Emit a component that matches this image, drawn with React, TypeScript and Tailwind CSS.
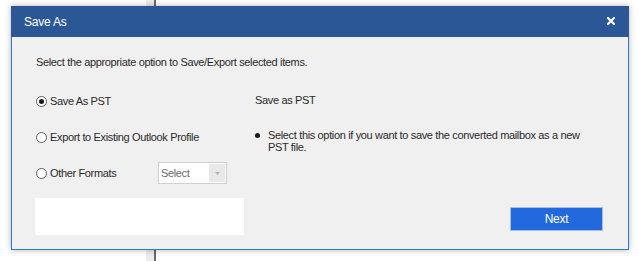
import { useState } from "react";

type Option = { id: string; label: string };

const options: Option[] = [
  { id: "pst", label: "Save As PST" },
  { id: "profile", label: "Export to Existing Outlook Profile" },
  { id: "other", label: "Other Formats" },
];

function Radio({ checked }: { checked: boolean }) {
  return (
    <span className="flex h-[11px] w-[11px] shrink-0 items-center justify-center rounded-full border border-[#5c5c5c] bg-white">
      {checked && <span className="h-[5px] w-[5px] rounded-full bg-[#1a1a1a]" />}
    </span>
  );
}

export default function App() {
  const [choice, setChoice] = useState("pst");

  return (
    <div
      className="relative h-[261px] w-[639px] overflow-hidden bg-white text-[11px] tracking-[-0.35px] text-[#2a2a2a]"
      style={{ fontFamily: '"Liberation Sans", Arial, sans-serif' }}
    >
      {/* window behind the dialog */}
      <div className="absolute left-[146px] top-0 flex h-full">
        <div className="h-full w-[8px] bg-[#ececec]" />
        <div className="h-full w-[2px] bg-[#6a6a6a]" />
      </div>

      <div className="relative ml-[11px] mt-[6px] flex h-[244px] w-[618px] flex-col border border-[#2f78d4] bg-[#f0f0f0] shadow-[0_0_6px_rgba(0,0,0,0.3)]">
        <div className="-mx-px -mt-px flex h-[31px] items-center justify-between bg-[#2b5797] pl-[13px] pr-[14px] text-white">
          <span className="text-[12px] tracking-[-0.2px]">Save As</span>
          <svg width="8" height="8" viewBox="0 0 8 8" className="mb-[2px]">
            <path d="M1 1 L7 7 M7 1 L1 7" stroke="white" strokeWidth="2" strokeLinecap="square" />
          </svg>
        </div>

        <div className="flex flex-1 flex-col pl-[24px] pr-[25px] pt-[17px]">
          <p className="leading-4">Select the appropriate option to Save/Export selected items.</p>

          <div className="mt-[20px] flex">
            <div className="flex w-[219px] flex-col">
              {options.map((o, i) => (
                <button
                  key={o.id}
                  type="button"
                  onClick={() => setChoice(o.id)}
                  className={
                    "flex h-[22px] items-center text-left " +
                    (i === 1 ? "mt-[14px]" : i === 2 ? "mt-[14px]" : "")
                  }
                >
                  <span className="flex w-[122px] shrink-0 items-center gap-[3px] whitespace-nowrap">
                    <Radio checked={choice === o.id} />
                    {o.label}
                  </span>
                  {o.id === "other" && (
                    <span className="flex h-[22px] w-[69px] items-center border border-[#cfcfcf] bg-white">
                      <span className="flex-1 pl-[2px] text-[#6b6b6b]">Select</span>
                      <span className="mr-px flex h-[18px] w-[16px] items-center justify-center bg-[#e8e8e8]">
                        <svg width="5" height="3" viewBox="0 0 5 3">
                          <path d="M0 0 H5 L2.5 3 Z" fill="#b0b0b0" />
                        </svg>
                      </span>
                    </span>
                  )}
                </button>
              ))}
            </div>

            <div className="flex flex-col pt-[2px]">
              <p className="leading-4">Save as PST</p>
              <div className="mt-[21px] flex gap-[8px] leading-[12px]">
                <span className="mt-[4px] h-[5px] w-[5px] shrink-0 rounded-full bg-[#1a1a1a]" />
                <p className="w-[325px]">
                  Select this option if you want to save the converted mailbox as a new PST file.
                </p>
              </div>
            </div>
          </div>

          <div className="mt-auto mb-[14px] flex items-start justify-between">
            <div className="-ml-px h-[37px] w-[209px] bg-white" />
            <button
              type="button"
              className="mt-[9px] h-[24px] w-[93px] border border-[#a8bee0] bg-[#2169dc] text-[12px] tracking-[-0.3px] text-white"
            >
              Next
            </button>
          </div>
        </div>
      </div>
    </div>
  );
}
